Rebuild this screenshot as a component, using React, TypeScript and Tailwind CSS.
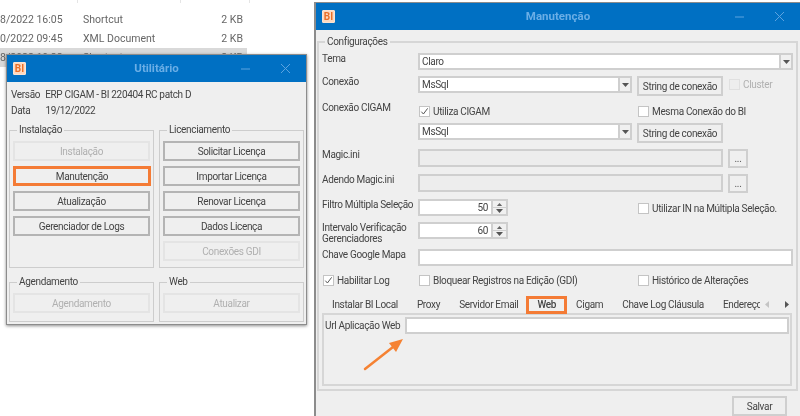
import React from "react";

function Logo() {
  return (
    <span className="flex h-[13px] w-[13px] items-center justify-center rounded-[1px] border border-[#fbe3d2] bg-[#fdd9c0] text-[10px] leading-none font-bold tracking-normal text-[#e96f28]">
      BI
    </span>
  );
}

function TitleBar({ title }: { title: string }) {
  return (
    <div className="relative flex h-[27px] shrink-0 items-center justify-center bg-[#0070c3]">
      <span className="absolute left-[6px] top-[7px]">
        <Logo />
      </span>
      <span className="text-[11.5px] font-bold tracking-normal text-[#6aaee6]">{title}</span>
      <svg className="absolute right-[15px] top-[8px] h-[11px] w-[50px]" viewBox="0 0 50 11" fill="none" stroke="#5da3df" strokeWidth="1">
        <path d="M0 6h9" />
        <path d="M40 1l9 9M49 1l-9 9" />
      </svg>
    </div>
  );
}

function Btn({ children, disabled, className = "" }: { children: React.ReactNode; disabled?: boolean; className?: string }) {
  return (
    <div
      className={`flex h-[20px] items-center justify-center border-2 text-[10px] ${
        disabled ? "border-[#e4e4e4] text-[#b0b0b0]" : "border-[#b4b4b4] text-[#444]"
      } ${className}`}
    >
      {children}
    </div>
  );
}

function Group({ title, className = "", children }: { title: string; className?: string; children: React.ReactNode }) {
  return (
    <fieldset className={`border border-[#cdcdcd] px-[3px] ${className}`}>
      <legend className="ml-[4px] px-[2px] text-[10px] leading-[12px] text-[#444]">{title}</legend>
      {children}
    </fieldset>
  );
}

function FileRow({ date, type, size, selected }: { date: string; type: string; size: string; selected?: boolean }) {
  return (
    <div className={`grid h-[19px] w-[247px] grid-cols-[83px_132px_28px] items-center text-[10.5px] tracking-normal text-[#666] ${selected ? "bg-[#d9d9d9]" : ""}`}>
      <span className="whitespace-nowrap">{date}</span>
      <span>{type}</span>
      <span className="whitespace-nowrap text-right">{size}</span>
    </div>
  );
}

function Utilitario() {
  return (
    <div className="absolute left-[6px] top-[54px] flex h-[271px] w-[301px] flex-col border border-[#8c8c8c] bg-[#efefef] shadow-[0_1px_3px_rgba(0,0,0,0.45)]">
      <TitleBar title="Utilitário" />
      <div className="px-[2px] pt-[4px] text-[10px] text-[#444]">
        <div className="flex h-[16px] items-center gap-[5px] pl-[2px]">
          <span>Versão</span>
          <span>ERP CIGAM - BI 220404 RC patch D</span>
        </div>
        <div className="flex h-[16px] items-center gap-[15px] pl-[2px]">
          <span>Data</span>
          <span>19/12/2022</span>
        </div>
        <div className="mt-[6px] grid grid-cols-2 gap-x-[5px] gap-y-[8px]">
          <Group title="Instalação" className="h-[144px]">
            <div className="flex flex-col gap-[5px] pt-[5px]">
              <Btn disabled>Instalação</Btn>
              <Btn className="-mr-[1px] !border-[3px] !border-[#f47b35]">Manutenção</Btn>
              <Btn>Atualização</Btn>
              <Btn>Gerenciador de Logs</Btn>
            </div>
          </Group>
          <Group title="Licenciamento" className="h-[144px]">
            <div className="flex flex-col gap-[5px] pt-[5px]">
              <Btn>Solicitar Licença</Btn>
              <Btn>Importar Licença</Btn>
              <Btn>Renovar Licença</Btn>
              <Btn>Dados Licença</Btn>
              <Btn disabled>Conexões GDI</Btn>
            </div>
          </Group>
          <Group title="Agendamento" className="h-[46px]">
            <div className="pt-[5px]">
              <Btn disabled>Agendamento</Btn>
            </div>
          </Group>
          <Group title="Web" className="h-[46px]">
            <div className="pt-[5px]">
              <Btn disabled>Atualizar</Btn>
            </div>
          </Group>
        </div>
      </div>
    </div>
  );
}

function Field({ children, className = "", disabled, right }: { children?: React.ReactNode; className?: string; disabled?: boolean; right?: boolean }) {
  return (
    <div
      className={`flex items-center border-2 border-[#cfcfcf] px-[2px] text-[10px] text-[#444] ${disabled ? "bg-[#ededed]" : "bg-white"} ${
        right ? "justify-end pr-[3px]" : ""
      } ${className}`}
    >
      {children}
    </div>
  );
}

function Caret() {
  return (
    <svg className="h-[4px] w-[7px]" viewBox="0 0 7 4">
      <path d="M0 0h7L3.5 4z" fill="#555" />
    </svg>
  );
}

function Combo({ value, className }: { value: string; className: string }) {
  return (
    <div className={`flex h-[17px] ${className}`}>
      <Field className="min-w-0 flex-1 border-r-0">{value}</Field>
      <div className="flex w-[14px] items-center justify-center border-2 border-[#cfcfcf] bg-[#f0f0f0]">
        <Caret />
      </div>
    </div>
  );
}

function Check({ label, checked, disabled, className = "" }: { label: string; checked?: boolean; disabled?: boolean; className?: string }) {
  return (
    <div className={`flex items-center gap-[3px] text-[10px] ${disabled ? "text-[#b0b0b0]" : "text-[#444]"} ${className}`}>
      <span className={`flex h-[11px] w-[11px] items-center justify-center border ${disabled ? "border-[#e0e0e0] bg-[#eeeeee]" : "border-[#c4c4c4] bg-white"}`}>
        {checked && (
          <svg className="h-[9px] w-[9px]" viewBox="0 0 10 10" fill="none" stroke="#555" strokeWidth="1.1">
            <path d="M1.5 5.2l2.3 2.6L8.5 1.5" />
          </svg>
        )}
      </span>
      <span className="whitespace-nowrap">{label}</span>
    </div>
  );
}

function ConnBtn() {
  return <div className="ml-[5px] flex h-[20px] w-[86px] items-center justify-center border-2 border-[#cfcfcf] text-[10px] text-[#444]">String de conexão</div>;
}

function Dots() {
  return <div className="ml-[5px] flex h-[19px] w-[20px] items-center justify-center border-2 border-[#cfcfcf] text-[10px] text-[#555]">...</div>;
}

function Row({ label, h, mt, children, labelClass = "leading-[12px]" }: { label?: string; h: string; mt: string; children: React.ReactNode; labelClass?: string }) {
  return (
    <div className={`flex ${h} ${mt}`}>
      <div className={`w-[96px] shrink-0 text-[10px] text-[#444] ${labelClass}`}>{label}</div>
      {children}
    </div>
  );
}

function Spin({ value }: { value: string }) {
  return (
    <div className="flex h-[17px] w-[90px]">
      <Field right className="min-w-0 flex-1">{value}</Field>
      <div className="flex w-[15px] flex-col border-2 border-l-0 border-[#cfcfcf] bg-[#f0f0f0]">
        <div className="flex flex-1 items-center justify-center border-b border-[#cfcfcf]">
          <svg className="h-[3px] w-[7px]" viewBox="0 0 7 4"><path d="M0 4h7L3.5 0z" fill="#666" /></svg>
        </div>
        <div className="flex flex-1 items-center justify-center">
          <Caret />
        </div>
      </div>
    </div>
  );
}

const TABS = ["Instalar BI Local", "Proxy", "Servidor Email", "Web", "Cigam", "Chave Log Cláusula", "Endereços"];

function Manutencao() {
  return (
    <div className="absolute left-[314px] top-[2px] flex h-[414px] w-[486px] flex-col border-l-2 border-t border-[#8c8c8c] bg-[#efefef]">
      <TitleBar title="Manutenção" />
      <div className="pl-[1px] pr-[2px] pt-[5px]">
        <fieldset className="h-[356px] border-2 border-[#d6d6d6] pl-[3px] pr-[2px]">
          <legend className="ml-[3px] px-[2px] text-[10px] leading-[14px] text-[#444]">Configurações</legend>
          <Row label="Tema" h="h-[17px]" mt="mt-[4px]">
            <Combo value="Claro" className="w-[375px]" />
          </Row>
          <Row label="Conexão" h="h-[20px]" mt="mt-[6px]">
            <Combo value="MsSql" className="w-[214px]" />
            <ConnBtn />
            <Check label="Cluster" disabled className="ml-[6px] h-[17px]" />
          </Row>
          <Row label="Conexão CIGAM" h="h-[18px]" mt="mt-[6px]">
            <Check label="Utiliza CIGAM" checked className="ml-[1px] h-[18px] w-[219px]" />
            <Check label="Mesma Conexão do BI" className="h-[18px]" />
          </Row>
          <Row h="h-[20px]" mt="mt-[3px]">
            <Combo value="MsSql" className="w-[214px]" />
            <ConnBtn />
          </Row>
          <Row label="Magic.ini" h="h-[19px]" mt="mt-[6px]">
            <Field disabled className="h-[18px] w-[305px]" />
            <Dots />
          </Row>
          <Row label="Adendo Magic.ini" h="h-[19px]" mt="mt-[6px]">
            <Field disabled className="h-[18px] w-[305px]" />
            <Dots />
          </Row>
          <Row label="Filtro Múltipla Seleção" h="h-[18px]" mt="mt-[6px]" labelClass="leading-[12px] whitespace-nowrap">
            <Spin value="50" />
            <Check label="Utilizar IN na Múltipla Seleção." className="ml-[130px] h-[18px]" />
          </Row>
          <Row label="Intervalo Verificação Gerenciadores" h="h-[18px]" mt="mt-[5px]" labelClass="leading-[11px]">
            <Spin value="60" />
          </Row>
          <Row label="Chave Google Mapa" h="h-[17px]" mt="mt-[9px]">
            <Field className="h-[17px] w-[375px]" />
          </Row>
          <div className="mt-[7px] flex h-[14px] items-center">
            <Check label="Habilitar Log" checked className="w-[96px] pl-[1px]" />
            <Check label="Bloquear Registros na Edição (GDI)" className="ml-[1px] w-[219px]" />
            <Check label="Histórico de Alterações" />
          </div>
          <div className="mt-[9px] flex h-[17px] items-center">
            <div className="flex h-[18px] w-[438px] items-center gap-[19px] overflow-hidden whitespace-nowrap pl-[10px] text-[10px] text-[#444]">
              {TABS.map((t) =>
                t === "Web" ? (
                  <span key={t} className="-ml-[11px] -mr-[10px] flex h-[18px] items-center border-[3px] border-[#f47b35] px-[8px] font-medium">
                    {t}
                  </span>
                ) : (
                  <span key={t}>{t}</span>
                ),
              )}
            </div>
            <svg className="ml-[5px] h-[7px] w-[24px]" viewBox="0 0 24 7">
              <path d="M4 0v7L0 3.5z" fill="#c4c4c4" />
              <path d="M20 0v7l4-3.5z" fill="#555" />
            </svg>
          </div>
          <div className="h-[73px] w-[470px] border-2 border-[#d6d6d6] pl-[1px] pt-[2px]">
            <div className="flex h-[17px] items-center">
              <span className="w-[80px] shrink-0 whitespace-nowrap text-[10px] text-[#444]">Url Aplicação Web</span>
              <Field className="h-[17px] w-[384px]" />
            </div>
          </div>
        </fieldset>
        <div className="flex justify-end pr-[11px] pt-[5px]">
          <div className="flex h-[20px] w-[55px] items-center justify-center border-2 border-[#cfcfcf] text-[10px] text-[#444]">Salvar</div>
        </div>
      </div>
      <svg className="absolute left-[46px] top-[333px] h-[36px] w-[46px]" viewBox="0 0 46 36" fill="none">
        <path d="M3 33L31 11" stroke="#f58233" strokeWidth="2.5" strokeLinecap="round" />
        <path d="M41 3L27 7l7 9z" fill="#f58233" />
      </svg>
    </div>
  );
}

export default function App() {
  return (
    <div className="relative h-[416px] w-[800px] overflow-hidden bg-white font-['Roboto',sans-serif] tracking-[-0.33px] blur-[0.3px]">
      <div className="flex h-[3px] w-[250px]">
        <span className="w-[78px] border-r border-[#e5e5e5]" />
        <span className="w-[103px] border-r border-[#e5e5e5]" />
        <span className="w-[69px] border-r border-[#e5e5e5]" />
      </div>
      <div className="mt-[7px]">
        <FileRow date="8/2022 16:05" type="Shortcut" size="2 KB" />
        <FileRow date="0/2022 09:45" type="XML Document" size="2 KB" />
        <FileRow date="8/2022 10:32" type="Shortcut" size="2 KB" selected />
      </div>
      <Utilitario />
      <Manutencao />
    </div>
  );
}
